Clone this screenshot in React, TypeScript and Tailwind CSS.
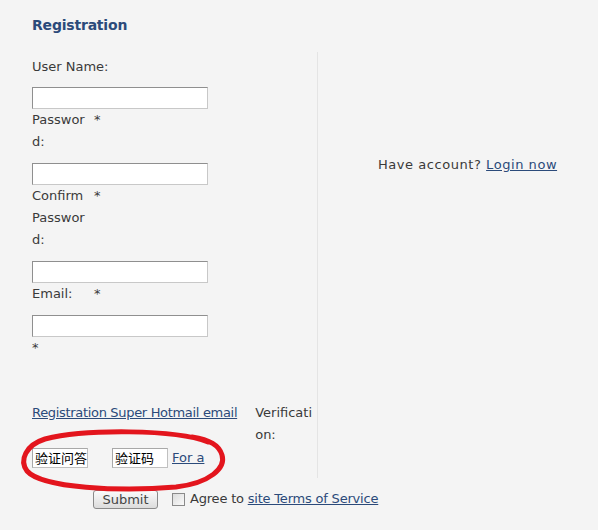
import React from "react";

const inputCls =
  "block h-[22px] w-[176px] bg-white border border-t-[#8f8f8f] border-l-[#8f8f8f] border-b-[#c8c8c8] border-r-[#c8c8c8] outline-none";

export default function App() {
  return (
    <div className="relative w-[598px] h-[530px] overflow-hidden bg-[#f4f4f4] text-[13px] leading-[22px] text-[#3a3a3a] font-['DejaVu_Sans',Verdana,sans-serif]">
      <h1 className="pl-8 pt-[14px] text-[14px] leading-[22px] font-bold text-[#2b4a7a] tracking-[-0.2px]">Registration</h1>
      <div className="mt-4 flex">
        <div className="w-[318px] pl-8 pt-1 pb-[10px] border-r border-[#e4e4e4]">
          <div className="flex">
            <span>User Name:</span>
          </div>
          <input className={inputCls + " mt-[9px]"} />
          <div className="flex">
            <div className="w-[62px]">
              <div>Passwor</div>
              <div>d:</div>
            </div>
            <span>*</span>
          </div>
          <input className={inputCls + " mt-[10px]"} />
          <div className="flex">
            <div className="w-[62px]">
              <div>Confirm</div>
              <div>Passwor</div>
              <div>d:</div>
            </div>
            <span>*</span>
          </div>
          <input className={inputCls + " mt-[10px]"} />
          <div className="flex">
            <div className="w-[62px]">Email:</div>
            <span>*</span>
          </div>
          <input className={inputCls + " mt-[10px]"} />
          <div>*</div>
          <div className="mt-[43px] flex">
            <a href="#" className="whitespace-nowrap text-[#2b4a7a] underline tracking-[-0.32px]">Registration Super Hotmail email</a>
            <div className="ml-[18px]">
              <div>Verificati</div>
              <div>on:</div>
            </div>
          </div>
          <div className="mt-[2px] flex h-5 items-center">
            <input
              readOnly
              defaultValue="验证问答"
              className="h-[20px] w-[56px] pl-[2px] bg-white border border-[#c0c0c0] border-t-[#a8a8a8] border-l-[#a8a8a8] text-[13px] text-black outline-none font-['Noto_Sans_CJK_SC',sans-serif]"
            />
            <input
              readOnly
              defaultValue="验证码"
              className="ml-6 h-[20px] w-[56px] pl-[2px] bg-white border border-[#c0c0c0] border-t-[#a8a8a8] border-l-[#a8a8a8] text-[13px] text-black outline-none font-['Noto_Sans_CJK_SC',sans-serif]"
            />
            <a href="#" className="ml-1 text-[#2b4a7a] underline">For a</a>
          </div>
        </div>
        <div className="flex-1 pl-[60px] pt-[102px] tracking-[0.55px] whitespace-nowrap">
          Have account? <a href="#" className="text-[#2b4a7a] underline">Login now</a>
        </div>
      </div>
      <div className="mt-[10px] flex items-center pl-[93px]">
        <button className="h-[19px] w-[65px] rounded-[3px] border border-[#8a8a8a] bg-gradient-to-b from-[#fbfbfb] to-[#dcdcdc] text-[13px] leading-[17px] font-normal text-[#444]">
          Submit
        </button>
        <span className="ml-[14px] h-[13px] w-[13px] border border-[#8a8a8a] bg-gradient-to-br from-[#dcdcdc] to-[#fafafa]" />
        <span className="ml-[5px] tracking-[-0.2px]">
          Agree to <a href="#" className="text-[#2b4a7a] underline">site Terms of Service</a>
        </span>
      </div>
      <svg
        className="pointer-events-none absolute left-0 top-0"
        width="598"
        height="530"
        viewBox="0 0 598 530"
      >
        <path
          d="M 208 442 C 175 429, 85 429, 45 439 C 26 445, 19 460, 27 471 C 42 488, 120 492, 176 487 C 210 483, 226 468, 222 455 C 219 445, 210 440, 192 437"
          fill="none"
          stroke="#e3151d"
          strokeWidth="5"
          strokeLinecap="round"
        />
      </svg>
    </div>
  );
}
